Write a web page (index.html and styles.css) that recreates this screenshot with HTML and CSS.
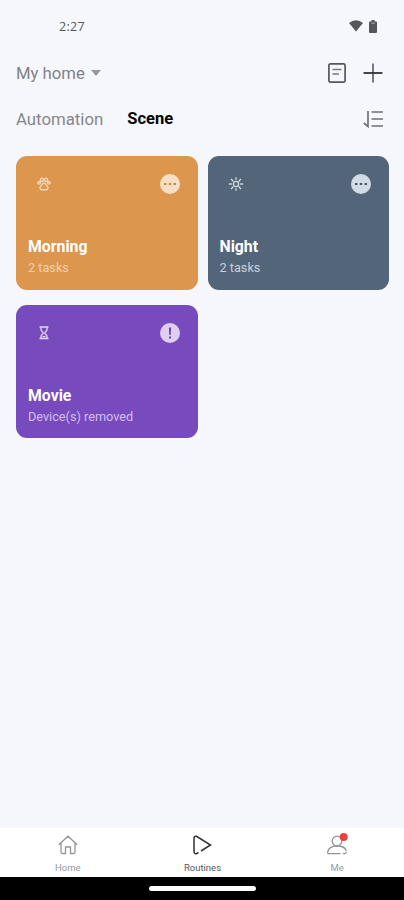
FILE: index.html
```html
<!DOCTYPE html>
<html lang="en">
<head>
<meta charset="utf-8">
<title>Routines</title>
<link rel="stylesheet" href="styles.css">
</head>
<body>
<div class="app">
  <header class="status">
    <span class="time">2:27</span>
    <span class="status-icons">
      <svg width="14" height="12" viewBox="0 0 14 12"><path d="M0 3Q7-2.600 14 3L7 11.500Z" fill="#54565a"/></svg>
      <svg width="8" height="13" viewBox="0 0 8 13"><path d="M2.500 0h3v1.500H7a1 1 0 0 1 1 1V12a1 1 0 0 1-1 1H1a1 1 0 0 1-1-1V2.500a1 1 0 0 1 1-1h1.500z" fill="#54565a"/><path d="M2 3.200h4" stroke="#a5a7aa"/></svg>
    </span>
  </header>
  <div class="home-row">
    <span class="home">My home</span>
    <svg class="caret" width="10" height="6" viewBox="0 0 10 6"><path d="M0 0h10L5 6z" fill="#97999c"/></svg>
    <svg class="log" width="18" height="20" viewBox="0 0 18 20" fill="none"><rect x=".9" y=".9" width="16.200" height="18.200" rx="1.500" stroke="#55575a" stroke-width="1.700"/><path d="M4.500 6.500h9M4.500 11h6.500" stroke="#77797c" stroke-width="1.700"/></svg>
    <svg width="20" height="20" viewBox="0 0 20 20"><path d="M10 .5v19" stroke="#77797c" stroke-width="2"/><path d="M.5 10h19" stroke="#303235" stroke-width="1.800"/></svg>
  </div>
  <nav class="tabs">
    <span class="tab">Automation</span>
    <span class="tab active">Scene</span>
    <svg class="sort" width="20" height="18" viewBox="0 0 20 18" fill="none" stroke="#707275" stroke-width="1.700"><path d="M5 1v15.500L.8 13M8.500 2H20M8.500 9H20M8.500 16H20"/></svg>
  </nav>
  <main class="grid">
    <article class="card morning">
      <div class="card-top">
        <svg width="14" height="14" viewBox="0 0 14 14" fill="none" stroke="#f4d7b6" stroke-width="1.400"><ellipse cx="4.900" cy="2.900" rx="1.500" ry="1.700"/><ellipse cx="9.100" cy="2.900" rx="1.500" ry="1.700"/><circle cx="2.200" cy="5.800" r="1.300"/><circle cx="11.800" cy="5.800" r="1.300"/><path d="M7 6.200C5.500 6.200 5 8 3.800 9.100S2.900 12.600 4.500 12.700h5c1.600-.1 1.900-2.500.7-3.600S8.500 6.200 7 6.200z"/></svg>
        <svg width="20" height="20" viewBox="0 0 20 20"><circle cx="10" cy="10" r="10" fill="#f6dfc4"/><path d="M4 9h2.400v2H4zM8.800 9h2.400v2H8.800zM13.600 9H16v2h-2.400z" fill="#ca8748"/></svg>
      </div>
      <h2>Morning</h2><p>2 tasks</p>
    </article>
    <article class="card night">
      <div class="card-top">
        <svg width="14" height="14" viewBox="0 0 14 14" fill="none" stroke="#d6dde5" stroke-width="1.300"><circle cx="7" cy="7" r="2.600"/><path d="M7 .3v2.500M7 11.200v2.500M0 7h2.800M11.200 7H14M2 2l2.500 2.500M9.500 9.500L12 12M12 2L9.500 4.500M4.500 9.500L2 12"/></svg>
        <svg width="20" height="20" viewBox="0 0 20 20"><circle cx="10" cy="10" r="10" fill="#d2dae5"/><path d="M4 9h2.400v2H4zM8.800 9h2.400v2H8.800zM13.600 9H16v2h-2.400z" fill="#455567"/></svg>
      </div>
      <h2>Night</h2><p>2 tasks</p>
    </article>
    <article class="card movie">
      <div class="card-top">
        <svg width="14" height="14" viewBox="0 0 14 14" fill="none" stroke="#e6d6f5" stroke-width="1.300"><path d="M2.500 1h9M2.500 12.500h9M4 1v2.500C4 5.500 6.300 5.800 6.300 7S4 8.500 4 10.500v2M10 1v2.500C10 5.500 7.700 5.800 7.700 7S10 8.500 10 10.500v2M5.500 10.700h3"/></svg>
        <svg width="20" height="20" viewBox="0 0 20 20"><circle cx="10" cy="10" r="10" fill="#dfcdf2"/><path d="M8.900 4.500h2.200l-.4 7.500H9.300zM9 13.400h2v2H9z" fill="#69449f"/></svg>
      </div>
      <h2>Movie</h2><p>Device(s) removed</p>
    </article>
  </main>
  <nav class="bottom">
    <div class="item">
      <svg width="20" height="20" viewBox="0 0 20 20" fill="none" stroke="#929496" stroke-width="1.300"><path d="M.8 9.700L10 1.200l9.200 8.500M3 8v9q0 1.500 1.500 1.500h3V12h5v6.500h3Q17 18.500 17 17V8"/></svg>
      <span>Home</span>
    </div>
    <div class="item current">
      <svg width="20" height="20" viewBox="0 0 20 20" fill="none" stroke="#303235" stroke-width="1.500"><path d="M6.500 17.500L4.300 18.700Q2 19 2 16.500v-13Q2 .8 4.500 1.300L18.500 10L9 16"/></svg>
      <span>Routines</span>
    </div>
    <div class="item">
      <svg width="20" height="20" viewBox="0 0 20 20" fill="none" stroke="#929496" stroke-width="1.300"><circle cx="10" cy="6" r="4.800"/><path d="M13.500 18.700H2Q.4 18.700.7 17C1.500 13 5 11 10 11s8.500 2 9.300 5M19.300 17q-.3 1.700-1.500 1.700h-2"/><circle cx="16.700" cy="2" r="4" fill="#e9423c" stroke="none"/></svg>
      <span>Me</span>
    </div>
  </nav>
  <footer class="system"><span class="pill"></span></footer>
</div>
</body>
</html>
```
FILE: styles.css
```css
* { box-sizing: border-box; }
body { margin: 0; font-family: Roboto, "Liberation Sans", sans-serif; }
svg { display: block; flex: none; overflow: visible; }
.app { width: 404px; height: 900px; background: #f5f7fc; display: flex; flex-direction: column; }
.status { height: 52px; padding: 0 27px 0 59px; display: flex; align-items: center; justify-content: space-between; }
.time { font-family: "Open Sans", sans-serif; font-size: 12.500px; color: #55575b; letter-spacing: .3px; }
.status-icons { display: flex; align-items: center; gap: 6px; }
.home-row { height: 42px; padding: 0 21px 0 16px; display: flex; align-items: center; }
.home { font-size: 16.700px; color: #808287; }
.caret { margin-left: 6px; }
.log { margin-left: auto; margin-right: 17px; }
.tabs { height: 49px; padding: 0 21px 0 16px; display: flex; align-items: center; }
.tab { font-size: 16.800px; color: #85878b; }
.active { margin-left: 24px; font-size: 16.500px; font-weight: 700; color: #050505; }
.sort { margin-left: auto; }
.grid { flex: 1; padding: 13px 15px 0 16px; display: grid; grid-template-columns: 1fr 1fr; grid-auto-rows: 133.500px; align-content: start; gap: 15px 10px; }
.card { border-radius: 11px; padding: 18px 18px 0 12px; color: #fff; }
.card-top { display: flex; align-items: center; justify-content: space-between; padding-left: 9px; height: 20px; margin-bottom: 43px; }
.morning { background: #dc964d; }
.night { background: #536579; }
.movie { background: #774bbe; }
.card h2 { margin: 0; font-size: 15.800px; line-height: 20px; font-weight: 700; }
.card p { margin: 2px 0 0; font-size: 12.700px; line-height: 18px; }
.morning p { color: #f2d1ab; }
.night p { color: #c8d0d9; }
.movie p { color: #d5bff0; }
.bottom { height: 49px; background: #fff; display: grid; grid-template-columns: repeat(3, 1fr); }
.item { display: flex; flex-direction: column; align-items: center; padding: 7px 0 0 1px; font-size: 9.500px; line-height: 12px; color: #97999b; }
.item span { margin-top: 7px; }
.current { color: #55575a; }
.system { height: 23px; background: #000; display: flex; justify-content: center; padding-top: 9px; }
.pill { width: 107px; height: 5px; border-radius: 3px; background: #fff; }
```
